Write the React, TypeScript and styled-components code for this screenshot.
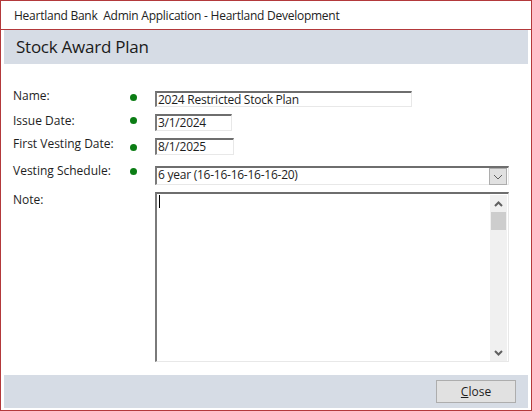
import * as React from "react";
import styled, { createGlobalStyle } from "styled-components";

const Global = createGlobalStyle`
html, body {
    margin: 0;
    padding: 0;
    background: #fff;
}
* {
    box-sizing: border-box;
}
`;

const font = `"Segoe UI", "Open Sans", "Noto Sans", sans-serif`;

const Window = styled.div`
width: 532px;
height: 411px;
border: 1px solid #b3393b;
background: #fff;
font-family: ${font};
color: #1e1e1e;
display: flex;
flex-direction: column;
overflow: hidden;
`;

const TitleBar = styled.div`
height: 29px;
padding: 0 0 0 13px;
display: flex;
align-items: center;
font-size: 12px;
letter-spacing: -0.25px;
border-bottom: 1px solid #b3393b;
color: #222;
white-space: pre;
`;

const Inner = styled.div`
flex: 1;
display: flex;
flex-direction: column;
padding: 0 3px 2px 3px;
`;

const Header = styled.div`
height: 34px;
background: #d6dce5;
display: flex;
align-items: center;
padding: 0 0 1px 12px;
font-size: 17px;
letter-spacing: -0.25px;
color: #1b1b1b;
`;

const Form = styled.div`
flex: 1;
display: flex;
flex-direction: column;
padding: 27px 0 0 9px;
`;

const Row = styled.div<{ $gap: number; $h: number }>`
display: grid;
grid-template-columns: 117px 25px 1fr;
height: ${p => p.$h}px;
margin-top: ${p => p.$gap}px;
`;

const Label = styled.div<{ $top: number }>`
font-size: 12px;
line-height: 16px;
margin-top: ${p => p.$top}px;
white-space: nowrap;
`;

const Dot = styled.span<{ $top: number }>`
display: block;
width: 7px;
height: 7px;
border-radius: 50%;
background: #0b7d14;
margin-top: ${p => p.$top}px;
`;

const Field = styled.div<{ $w: number }>`
width: ${p => p.$w}px;
height: 100%;
border-top: 2px solid #6e6e6e;
border-left: 2px solid #7a7a7a;
border-right: 1px solid #e8e8e8;
border-bottom: 1px solid #e8e8e8;
font-size: 12px;
letter-spacing: -0.25px;
line-height: 13px;
padding: 0 0 0 1px;
display: flex;
align-items: flex-start;
position: relative;
white-space: nowrap;
`;

const DropButton = styled.div`
position: absolute;
right: 1px;
top: 0;
width: 18px;
height: 17px;
background: #e1e1e1;
border: 1px solid #adadad;
display: flex;
align-items: center;
justify-content: center;
`;

const Caret = styled.div`
width: 1px;
height: 13px;
background: #000;
margin: 1px 0 0 1px;
`;

const ScrollBar = styled.div`
position: absolute;
right: 1px;
top: 1px;
bottom: 0;
width: 17px;
background: #f0f0f0;
display: flex;
flex-direction: column;
align-items: center;
`;

const Arrow = styled.div`
height: 17px;
width: 17px;
display: flex;
align-items: center;
justify-content: center;
`;

const Thumb = styled.div`
width: 15px;
height: 18px;
background: #cdcdcd;
`;

const Spacer = styled.div`
flex: 1;
`;

const Footer = styled.div`
height: 33px;
margin-top: -1px;
background: #d6dce5;
display: flex;
align-items: center;
justify-content: flex-end;
padding: 0 12px 1px 0;
`;

const Button = styled.div`
width: 80px;
height: 23px;
background: #e1e1e1;
border: 1px solid #adadad;
font-size: 12px;
display: flex;
align-items: center;
justify-content: center;
color: #1e1e1e;
`;

const Chevron = ({ up }: { up?: boolean }) => (
    <svg width="9" height="6" viewBox="0 0 9 6">
        <path
            d={up ? "M1 5 L4.5 1.5 L8 5" : "M1 1 L4.5 4.5 L8 1"}
            fill="none"
            stroke="#606060"
            strokeWidth="2"
        />
    </svg>
);

const ThinChevron = () => (
    <svg width="10" height="6" viewBox="0 0 10 6">
        <path d="M1 1 L5 5 L9 1" fill="none" stroke="#606060" strokeWidth="1" />
    </svg>
);

export default function App() {
    return (
        <>
            <Global />
            <Window>
                <TitleBar>Heartland Bank  Admin Application - Heartland Development</TitleBar>
                <Inner>
                    <Header>Stock Award Plan</Header>
                    <Form>
                        <Row $gap={0} $h={16}>
                            <Label $top={-3}>Name:</Label>
                            <Dot $top={3} />
                            <Field $w={257}>2024 Restricted Stock Plan</Field>
                        </Row>
                        <Row $gap={7} $h={17}>
                            <Label $top={-1}>Issue Date:</Label>
                            <Dot $top={3} />
                            <Field $w={77}>3/1/2024</Field>
                        </Row>
                        <Row $gap={7} $h={17}>
                            <Label $top={-2}>First Vesting Date:</Label>
                            <Dot $top={6} />
                            <Field $w={79}>8/1/2025</Field>
                        </Row>
                        <Row $gap={11} $h={19}>
                            <Label $top={-3}>Vesting Schedule:</Label>
                            <Dot $top={2} />
                            <Field $w={354}>
                                6 year (16-16-16-16-16-20)
                                <DropButton>
                                    <ThinChevron />
                                </DropButton>
                            </Field>
                        </Row>
                        <Row $gap={7} $h={170}>
                            <Label $top={0}>Note:</Label>
                            <span />
                            <Field $w={354}>
                                <Caret />
                                <ScrollBar>
                                    <Arrow>
                                        <Chevron up />
                                    </Arrow>
                                    <Thumb />
                                    <Spacer />
                                    <Arrow>
                                        <Chevron />
                                    </Arrow>
                                </ScrollBar>
                            </Field>
                        </Row>
                    </Form>
                    <Footer>
                        <Button>
                            <span>
                                <u>C</u>lose
                            </span>
                        </Button>
                    </Footer>
                </Inner>
            </Window>
        </>
    );
}
